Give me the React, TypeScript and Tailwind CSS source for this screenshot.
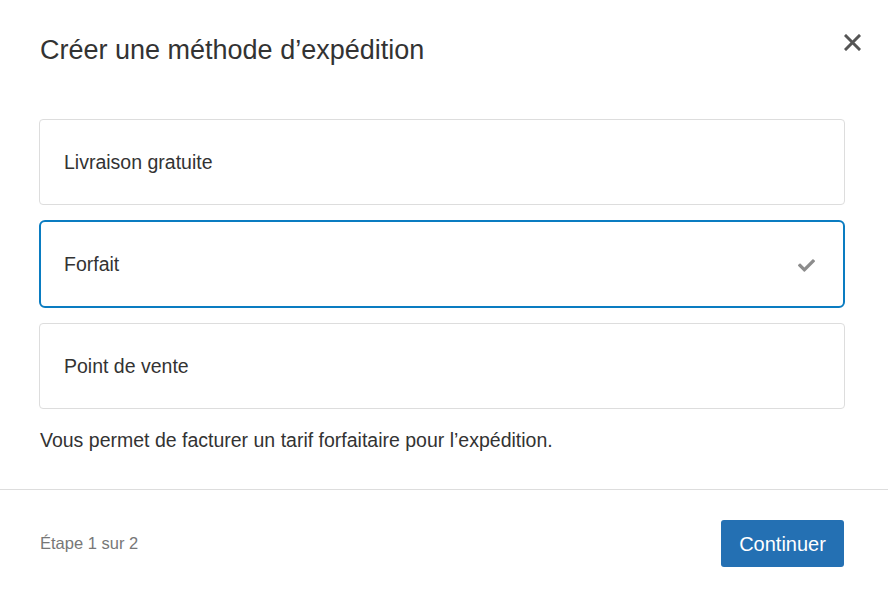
import React from "react";
import { FaCheck } from "react-icons/fa";

const options = [
  { label: "Livraison gratuite", selected: false },
  { label: "Forfait", selected: true },
  { label: "Point de vente", selected: false },
];

export default function App() {
  return (
    <div
      className="w-[888px] h-[590px] bg-white text-[#333] overflow-hidden"
      style={{ fontFamily: '"Liberation Sans", Arial, sans-serif' }}
    >
      {/* Header */}
      <div className="flex items-start justify-between pl-10 pr-[27px] pt-[34px] h-[119px]">
        <h2 className="text-[27px] leading-[33px] text-[#333]">Créer une méthode d’expédition</h2>
        <button className="mt-[0px] w-[17px] h-[17px] flex items-center justify-center">
          <svg width="17" height="17" viewBox="0 0 17 17">
            <path d="M2 2 L15 15 M15 2 L2 15" stroke="#555" strokeWidth="3" strokeLinecap="square" />
          </svg>
        </button>
      </div>

      {/* Options */}
      <div className="pl-[39px] pr-[43px] flex flex-col gap-[15px]">
        {options.map((o) =>
          o.selected ? (
            <div
              key={o.label}
              className="h-[88px] border-2 border-[#0a7cc1] rounded-[6px] flex items-center justify-between pl-[23px] pr-[28px] pt-[2px]"
            >
              <span className="text-[19.5px]">{o.label}</span>
              <FaCheck className="text-[#8c8c8c]" size={17} />
            </div>
          ) : (
            <div
              key={o.label}
              className="h-[86px] border border-[#dddddd] rounded-[4px] flex items-center pl-[24px] pt-[2px]"
            >
              <span className="text-[19.5px]">{o.label}</span>
            </div>
          )
        )}
      </div>

      <p className="pl-10 mt-[19px] text-[19.5px] leading-[24px]">
        Vous permet de facturer un tarif forfaitaire pour l’expédition.
      </p>

      {/* Footer */}
      <div className="mt-[37px] border-t border-[#dddddd] flex items-center justify-between pl-10 pr-[44px] pt-[30px]">
        <span className="text-[16.5px] text-[#777]">Étape 1 sur 2</span>
        <button className="h-[47px] w-[123px] bg-[#2470b3] rounded-[3px] text-white text-[20px]">
          Continuer
        </button>
      </div>
    </div>
  );
}
